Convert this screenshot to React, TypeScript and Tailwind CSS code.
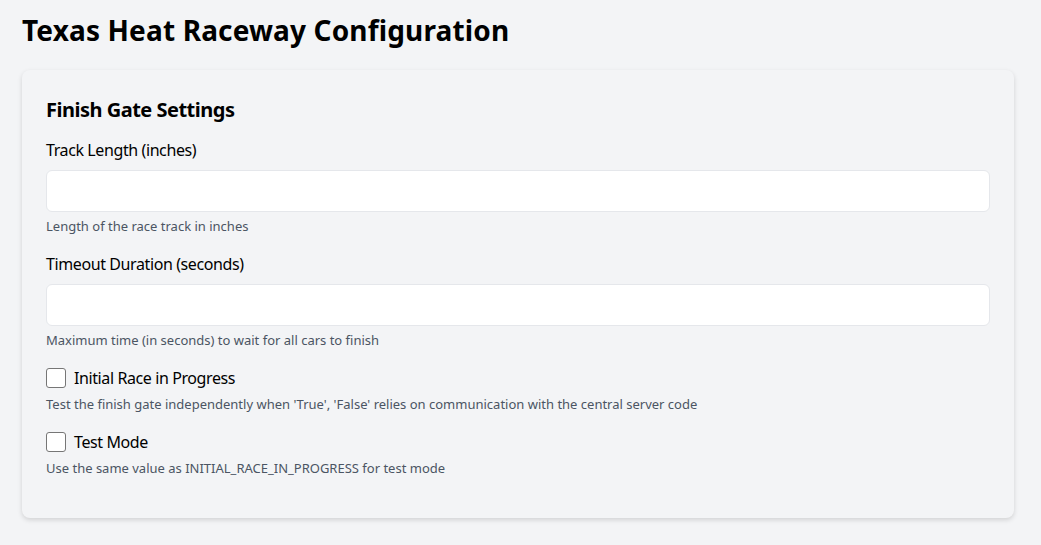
export default function App() {
  return (
    <div
      className="min-h-[545px] bg-[#f3f4f6] px-[22px] pt-[12px] text-black"
      style={{ fontFamily: '"Noto Sans", "Open Sans", sans-serif' }}
    >
      <h1 className="text-[28px] font-bold leading-[36px] tracking-[0.15px] mb-[22px]">
        Texas Heat Raceway Configuration
      </h1>

      <div className="w-[992px] rounded-lg bg-[#f3f4f6] shadow-[0_2px_5px_rgba(0,0,0,0.14)] px-6 pt-6 pb-6">
        <h2 className="text-[20px] font-bold leading-7 tracking-tight mt-[2px] mb-[14px]">Finish Gate Settings</h2>

        <div className="mb-4">
          <label className="block text-base leading-6 tracking-tight mb-2">Track Length (inches)</label>
          <input className="block w-full h-[42px] rounded-md border border-[#e5e7eb] bg-white px-3" />
          <p className="mt-1 text-[13px] leading-5 text-[#4b5563]">Length of the race track in inches</p>
        </div>

        <div className="mb-4">
          <label className="block text-base leading-6 tracking-tight mb-2">Timeout Duration (seconds)</label>
          <input className="block w-full h-[42px] rounded-md border border-[#e5e7eb] bg-white px-3" />
          <p className="mt-1 text-[13px] leading-5 text-[#4b5563]">
            Maximum time (in seconds) to wait for all cars to finish
          </p>
        </div>

        <div className="mb-4">
          <label className="flex items-center gap-2 text-base leading-6 tracking-tight">
            <span className="w-5 h-5 rounded-[3px] border border-[#767676] bg-white" />
            Initial Race in Progress
          </label>
          <p className="mt-1 text-[13px] leading-5 text-[#4b5563]">
            Test the finish gate independently when 'True', 'False' relies on communication with the central server code
          </p>
        </div>

        <div className="mb-4">
          <label className="flex items-center gap-2 text-base leading-6 tracking-tight">
            <span className="w-5 h-5 rounded-[3px] border border-[#767676] bg-white" />
            Test Mode
          </label>
          <p className="mt-1 text-[13px] leading-5 text-[#4b5563]">
            Use the same value as INITIAL_RACE_IN_PROGRESS for test mode
          </p>
        </div>
      </div>
    </div>
  );
}
